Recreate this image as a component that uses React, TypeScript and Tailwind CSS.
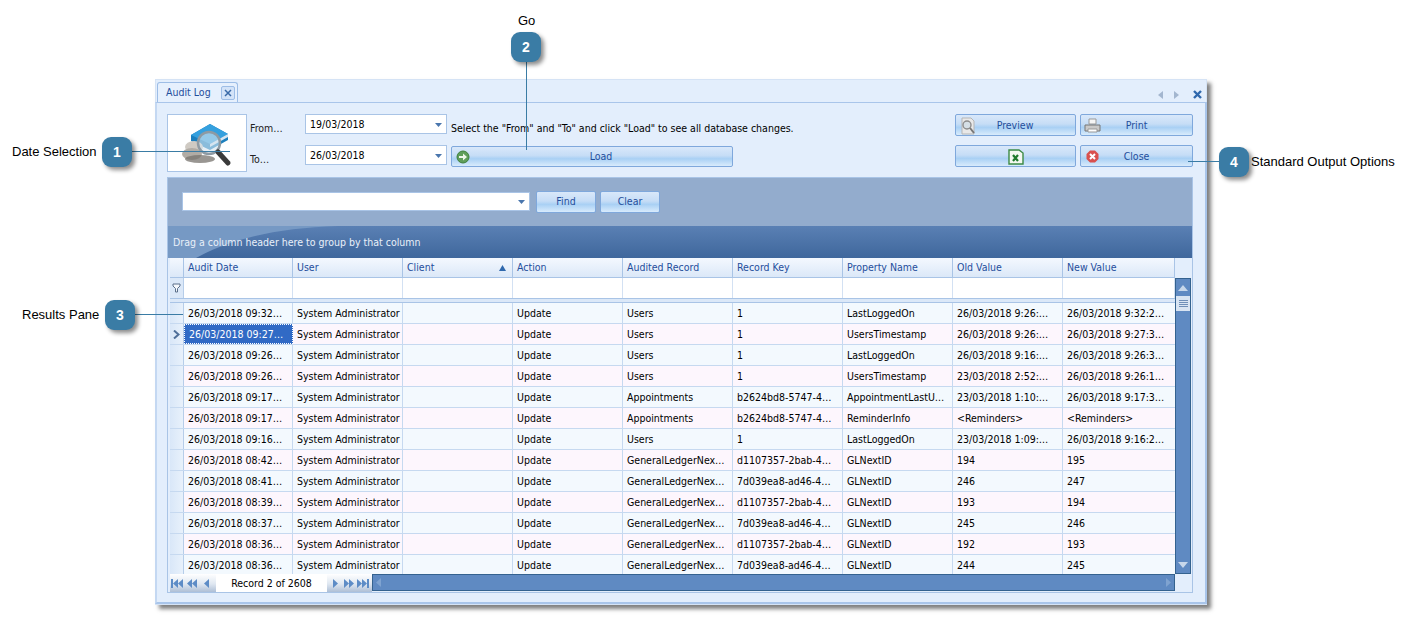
import React from 'react';

const COLS = 'grid grid-cols-[14px_109px_110px_110px_110px_110px_110px_110px_110px_112px]';

const HEADERS = ['Audit Date', 'User', 'Client', 'Action', 'Audited Record', 'Record Key', 'Property Name', 'Old Value', 'New Value'];

// date, record, key, property, old, new
const ROWS: string[][] = [
  ['26/03/2018 09:32…', 'Users', '1', 'LastLoggedOn', '26/03/2018 9:26:…', '26/03/2018 9:32:2…'],
  ['26/03/2018 09:27…', 'Users', '1', 'UsersTimestamp', '26/03/2018 9:26:…', '26/03/2018 9:27:3…'],
  ['26/03/2018 09:26…', 'Users', '1', 'LastLoggedOn', '26/03/2018 9:16:…', '26/03/2018 9:26:3…'],
  ['26/03/2018 09:26…', 'Users', '1', 'UsersTimestamp', '23/03/2018 2:52:…', '26/03/2018 9:26:1…'],
  ['26/03/2018 09:17…', 'Appointments', 'b2624bd8-5747-4…', 'AppointmentLastU…', '23/03/2018 1:10:…', '26/03/2018 9:17:3…'],
  ['26/03/2018 09:17…', 'Appointments', 'b2624bd8-5747-4…', 'ReminderInfo', '<Reminders>', '<Reminders>'],
  ['26/03/2018 09:16…', 'Users', '1', 'LastLoggedOn', '23/03/2018 1:09:…', '26/03/2018 9:16:2…'],
  ['26/03/2018 08:42…', 'GeneralLedgerNex…', 'd1107357-2bab-4…', 'GLNextID', '194', '195'],
  ['26/03/2018 08:41…', 'GeneralLedgerNex…', '7d039ea8-ad46-4…', 'GLNextID', '246', '247'],
  ['26/03/2018 08:39…', 'GeneralLedgerNex…', 'd1107357-2bab-4…', 'GLNextID', '193', '194'],
  ['26/03/2018 08:37…', 'GeneralLedgerNex…', '7d039ea8-ad46-4…', 'GLNextID', '245', '246'],
  ['26/03/2018 08:36…', 'GeneralLedgerNex…', 'd1107357-2bab-4…', 'GLNextID', '192', '193'],
  ['26/03/2018 08:36…', 'GeneralLedgerNex…', '7d039ea8-ad46-4…', 'GLNextID', '244', '245'],
];

const BTN =
  'flex items-center rounded-[2px] border border-[#7fa8dc] bg-[linear-gradient(#d9e8fa_0%,#c6ddf6_45%,#a9d0f4_62%,#d8ebfc_100%)] pt-[1px] text-[#1f4e9c]';

const Callout = ({ n, className }: { n: number; className: string }) => (
  <div
    className={`absolute flex h-[30px] w-[30px] items-center justify-center rounded-[9px] bg-[#3a7ca5] font-['Liberation_Sans',sans-serif] text-[14px] font-bold text-white shadow-[3px_3px_4px_rgba(0,0,0,0.45)] [font-stretch:normal] ${className}`}
  >
    {n}
  </div>
);

const DateField = ({ value }: { value: string }) => (
  <div className="flex h-[20px] w-[142px] items-center justify-between border border-[#a9c4e6] bg-white pl-1 pr-[4px] pt-[1px] text-black">
    {value}
    <svg width="7" height="4" viewBox="0 0 7 4">
      <path d="M0 0h7L3.5 4z" fill="#4a76ad" />
    </svg>
  </div>
);

const LogoIcon = () => (
  <svg width="78" height="56" viewBox="0 0 78 56">
    <path d="M23 20 L42 9 L60 19 L60 25 L42 35 L23 26 Z" fill="#1b7fbe" />
    <path d="M23 20 L42 9 L60 19 L42 29 Z" fill="#35a0de" />
    <path d="M42 29 L60 19 L60 22 L42 32 Z" fill="#d7e6f2" />
    <ellipse cx="26" cy="32" rx="9" ry="6" fill="#cfcac3" />
    <ellipse cx="24" cy="39" rx="10" ry="6" fill="#b1aca5" />
    <ellipse cx="32" cy="44" rx="15" ry="4" fill="#77736e" opacity=".75" />
    <circle cx="41" cy="28" r="11" fill="#d5e4ee" fillOpacity=".6" stroke="#8e9aa3" strokeWidth="2.5" />
    <path d="M50 37 L60 48" stroke="#3a3a3a" strokeWidth="5" strokeLinecap="round" />
  </svg>
);

const NavIcon = ({ d }: { d: string }) => (
  <svg width="12" height="9" viewBox="0 0 12 9">
    <path d={d} fill="#5d8cc6" />
  </svg>
);

const Nav = () => (
  <div className="flex h-full w-[202px] items-center bg-[linear-gradient(#ffffff,#dfe7f1_55%,#aebfd6)]">
    <div className="flex w-[46px] items-center gap-[3px] pl-[1px]">
      <NavIcon d="M0 0h2v9H0zM7 0v9L2 4.5zM12 0v9L7 4.5z" />
      <NavIcon d="M6 0v9L1 4.5zM11 0v9L6 4.5z" />
      <NavIcon d="M8 0v9L3 4.5z" />
    </div>
    <div className="flex h-full w-[111px] items-center justify-center bg-white pt-[1px] text-black">Record 2 of 2608</div>
    <div className="flex items-center gap-[2px] pl-[2px]">
      <NavIcon d="M4 0v9l5-4.5z" />
      <NavIcon d="M1 0v9l5-4.5zM6 0v9l5-4.5z" />
      <NavIcon d="M0 0v9l5-4.5zM5 0v9l5-4.5zM10 0h2v9h-2z" />
    </div>
  </div>
);

const GridRow = ({ row, index }: { row: string[]; index: number }) => {
  const selected = index === 1;
  const cells = [row[0], 'System Administrator', '', 'Update', row[1], row[2], row[3], row[4], row[5]];
  const bg = index % 2 === 0 ? 'bg-[#f3f9fe]' : 'bg-[#fdf6fd]';
  return (
    <div className={`${COLS} h-[21px] border-b border-[#c6d9f0] ${bg}`}>
      <div className="flex items-center justify-center border-r border-[#b6cde9] bg-[linear-gradient(90deg,#d9e7f8,#e8f1fb)]">
        {selected && (
          <svg width="7" height="9" viewBox="0 0 7 9">
            <path d="M1 0.5 L5.5 4.5 L1 8.5" fill="none" stroke="#4f6f99" strokeWidth="2" />
          </svg>
        )}
      </div>
      {cells.map((c, i) => (
        <div
          key={i}
          className={`flex items-center overflow-hidden whitespace-nowrap pl-[4px] pt-[1px] ${i < 8 ? 'border-r border-[#c6d9f0]' : ''} ${
            selected && i === 0 ? 'border border-dotted border-white bg-[#316ac5] text-white' : 'text-black'
          }`}
        >
          {c}
        </div>
      ))}
    </div>
  );
};

export default function App() {
  return (
    <div className="relative h-[617px] w-[1411px] overflow-hidden bg-white pl-[155px] pt-[79px] font-['DejaVu_Sans',sans-serif] text-[10.5px] [font-stretch:condensed]">
      {/* callouts */}
      <div className="font-['Liberation_Sans',sans-serif] text-[13px] text-black [font-stretch:normal]">
        <div className="absolute left-[12px] top-[142px]">Date Selection</div>
        <div className="absolute left-[518px] top-[11px]">Go</div>
        <div className="absolute left-[22px] top-[305px]">Results Pane</div>
        <div className="absolute left-[1251px] top-[152px]">Standard Output Options</div>
      </div>

      {/* window */}
      <div className="h-[526px] w-[1052px] border border-[#d5e3f5] bg-[#e3eefc] shadow-[4px_4px_4px_rgba(0,0,0,0.5)]">
        <div className="flex h-[22px] items-end justify-between pl-[1px] pr-[4px]">
          <div className="flex h-[20px] w-[81px] items-center justify-between rounded-t-[3px] border border-b-0 border-[#9dbde6] bg-[#e6f0fd] pl-[8px] pr-[2px] text-[#1f4e9c]">
            Audit Log
            <div className="flex h-[14px] w-[14px] items-center justify-center rounded-[2px] border border-[#9dbde6] bg-[#d3e3f8]">
              <svg width="8" height="8" viewBox="0 0 8 8">
                <path d="M1 1l6 6M7 1l-6 6" stroke="#3a6aa8" strokeWidth="1.5" />
              </svg>
            </div>
          </div>
          <div className="mb-[3px] flex items-center gap-[11px]">
            <svg width="5" height="8" viewBox="0 0 5 8"><path d="M5 0v8L0 4z" fill="#a3b6cf" /></svg>
            <svg width="5" height="8" viewBox="0 0 5 8"><path d="M0 0v8l5-4z" fill="#a3b6cf" /></svg>
            <svg className="ml-[3px]" width="9" height="9" viewBox="0 0 9 9">
              <path d="M1 1l7 7M8 1L1 8" stroke="#2f68ad" strokeWidth="2.4" />
            </svg>
          </div>
        </div>

        <div className="mx-[-1px] h-[502px] border-2 border-t-[1px] border-[#a9c5ea] border-l-[#c4d8f2] bg-[#e3eefc] px-[10px] pt-[11px]">
          {/* top bar */}
          <div className="flex h-[58px] text-[#222]">
            <div className="flex h-[58px] w-[80px] items-center justify-center border border-[#a9c4e6] bg-white">
              <LogoIcon />
            </div>
            <div className="ml-[3px] flex w-[55px] flex-col gap-[11px] pt-[7px]">
              <div className="h-[20px]">From…</div>
              <div className="h-[20px]">To…</div>
            </div>
            <div className="flex flex-col gap-[11px]">
              <DateField value="19/03/2018" />
              <DateField value="26/03/2018" />
            </div>
            <div className="ml-[4px] flex w-[504px] flex-col">
              <div className="h-[32px] pt-[7px] text-black">Select the "From" and "To" and click "Load" to see all database changes.</div>
              <button className={`${BTN} h-[21px] w-[282px] pl-[4px]`}>
                <svg width="14" height="14" viewBox="0 0 14 14">
                  <circle cx="7" cy="7" r="6" fill="#5f9e5a" stroke="#3f7f3c" />
                  <path d="M3 6h4V3.5L11 7l-4 3.5V8H3z" fill="#eef6ea" />
                </svg>
                <span className="flex-1 text-center">Load</span>
              </button>
            </div>
            <div className="grid grid-cols-[121px_113px] content-start gap-x-[4px] gap-y-[9px]">
              <button className={`${BTN} h-[22px] pl-[3px]`}>
                <svg width="18" height="18" viewBox="0 0 18 18">
                  <path d="M3 1h9l3 3v13H3z" fill="#e8e8e8" stroke="#b5b5b5" />
                  <circle cx="8" cy="8" r="4" fill="#d5dfe6" stroke="#8d8d8d" strokeWidth="1.4" />
                  <path d="M11 11l4 5" stroke="#777" strokeWidth="2" />
                </svg>
                <span className="flex-1 pr-[22px] text-center">Preview</span>
              </button>
              <button className={`${BTN} h-[22px] pl-[3px]`}>
                <svg width="17" height="16" viewBox="0 0 17 16">
                  <path d="M5 1h7v5H5z" fill="#f5f5f5" stroke="#999" />
                  <path d="M1 7h15v6H1z" fill="#c9c9c9" stroke="#777" />
                  <path d="M4 11h9v3H4z" fill="#fff" stroke="#999" />
                </svg>
                <span className="flex-1 pr-[20px] text-center">Print</span>
              </button>
              <button className={`${BTN} h-[22px] justify-center`}>
                <svg width="16" height="16" viewBox="0 0 16 16">
                  <path d="M1 1h10l4 3v11H1z" fill="#f4f8f1" stroke="#3d8a45" strokeWidth="1.4" />
                  <path d="M5 6l5 6M10 6l-5 6" stroke="#1f7a2c" strokeWidth="2.2" />
                </svg>
              </button>
              <button className={`${BTN} h-[22px] pl-[5px]`}>
                <svg width="13" height="13" viewBox="0 0 13 13">
                  <path d="M4 0.5h5L12.5 4v5L9 12.5H4L0.5 9V4z" fill="#d9504e" />
                  <path d="M4 4l5 5M9 4L4 9" stroke="#fff" strokeWidth="2" />
                </svg>
                <span className="flex-1 pr-[18px] text-center">Close</span>
              </button>
            </div>
          </div>

          {/* grid box */}
          <div className="mt-[5px] h-[416px] w-[1026px] border border-[#a9c4e6] bg-[#e3eefc] pl-[2px] pr-[1px]">
            <div className="-ml-[2px] -mr-[1px] flex h-[48px] items-center gap-[4px] bg-[#93accd] pb-[1px] pl-[14px]">
              <div className="flex h-[19px] w-[348px] items-center justify-end border border-[#a9c4e6] bg-white pr-[4px]">
                <svg width="7" height="4" viewBox="0 0 7 4"><path d="M0 0h7L3.5 4z" fill="#4a76ad" /></svg>
              </div>
              <button className={`${BTN} ml-[2px] h-[22px] w-[60px] justify-center`}>Find</button>
              <button className={`${BTN} h-[22px] w-[60px] justify-center`}>Clear</button>
            </div>
            <div className="relative -ml-[2px] -mr-[1px] flex h-[32px] items-center overflow-hidden bg-[linear-gradient(#5a80b4,#3f679c)] pl-[5px] pt-[2px] text-[#e9f0f9]">
              <svg className="absolute left-0 top-0" width="170" height="32" viewBox="0 0 170 32">
                <path d="M0 0H170C110 2 65 12 28 32H0Z" fill="#7699c4" />
              </svg>
              <span className="relative">Drag a column header here to group by that column</span>
            </div>

            <div className={`${COLS} h-[20px] w-[1005px] border-b border-[#a9c4e6] bg-[linear-gradient(#f4f8fe,#dbe8f8)] text-[#1f4e9c]`}>
              <div className="border-r border-[#a9c4e6]" />
              {HEADERS.map(h => (
                <div key={h} className="flex items-center justify-between border-r border-[#a9c4e6] pl-[4px] pr-[6px] pt-[1px]">
                  {h}
                  {h === 'Client' && (
                    <svg width="7" height="6" viewBox="0 0 7 6"><path d="M0 6h7L3.5 0z" fill="#2f68ad" /></svg>
                  )}
                </div>
              ))}
            </div>

            <div className="flex">
              <div className="w-[1005px]">
                <div className={`${COLS} h-[20px] bg-white`}>
                  <div className="flex items-center justify-center border-r border-[#b6cde9] bg-[#dbe8f8]">
                    <svg width="9" height="10" viewBox="0 0 9 10">
                      <path d="M1 1h7v2L5.5 5.5V9h-2V5.5L1 3z" fill="#f5f8fc" stroke="#5a6f8a" />
                    </svg>
                  </div>
                  {HEADERS.map(h => (
                    <div key={h} className="border-r border-[#d3e1f3]" />
                  ))}
                </div>
                <div className="h-[5px] border-y border-[#a9c4e6] bg-[#dbe8f8]" />
                <div className="h-[271px] overflow-hidden">
                  {ROWS.map((r, i) => (
                    <GridRow key={i} row={r} index={i} />
                  ))}
                </div>
              </div>
              <div className="flex h-[296px] w-[16px] flex-col border border-[#34628f] bg-[#5f8ac2]">
                <div className="flex h-[17px] items-center justify-center">
                  <svg width="10" height="6" viewBox="0 0 10 6"><path d="M0 6h10L5 0z" fill="#c7d7ea" /></svg>
                </div>
                <div className="flex h-[15px] flex-col items-center justify-center gap-[1px] bg-[#d8e4f2]">
                  <div className="h-px w-[9px] bg-[#6f8fb8]" />
                  <div className="h-px w-[9px] bg-[#6f8fb8]" />
                  <div className="h-px w-[9px] bg-[#6f8fb8]" />
                  <div className="h-px w-[9px] bg-[#6f8fb8]" />
                </div>
                <div className="flex-1" />
                <div className="flex h-[17px] items-center justify-center">
                  <svg width="10" height="6" viewBox="0 0 10 6"><path d="M0 0h10L5 6z" fill="#c7d7ea" /></svg>
                </div>
              </div>
            </div>

            <div className="flex h-[18px] w-[1005px]">
              <Nav />
              <div className="flex h-[17px] w-[803px] items-center justify-between border border-[#34628f] bg-[#5f8ac2] px-[3px]">
                <svg width="5" height="9" viewBox="0 0 5 9"><path d="M5 0v9L0 4.5z" fill="#7fa3d0" /></svg>
                <svg width="5" height="9" viewBox="0 0 5 9"><path d="M0 0v9l5-4.5z" fill="#7fa3d0" /></svg>
              </div>
            </div>
          </div>
        </div>
      </div>

      {/* leader lines */}
      <div className="absolute left-[132px] top-[151px] h-px w-[98px] bg-[#3a7ca5]" />
      <div className="absolute left-[526px] top-[62px] h-[88px] w-px bg-[#3a7ca5]" />
      <div className="absolute left-[135px] top-[314px] h-px w-[48px] bg-[#3a7ca5]" />
      <div className="absolute left-[1188px] top-[161px] h-px w-[31px] bg-[#3a7ca5]" />

      <Callout n={1} className="left-[102px] top-[137px]" />
      <Callout n={2} className="left-[511px] top-[32px]" />
      <Callout n={3} className="left-[105px] top-[300px]" />
      <Callout n={4} className="left-[1219px] top-[147px]" />
    </div>
  );
}
